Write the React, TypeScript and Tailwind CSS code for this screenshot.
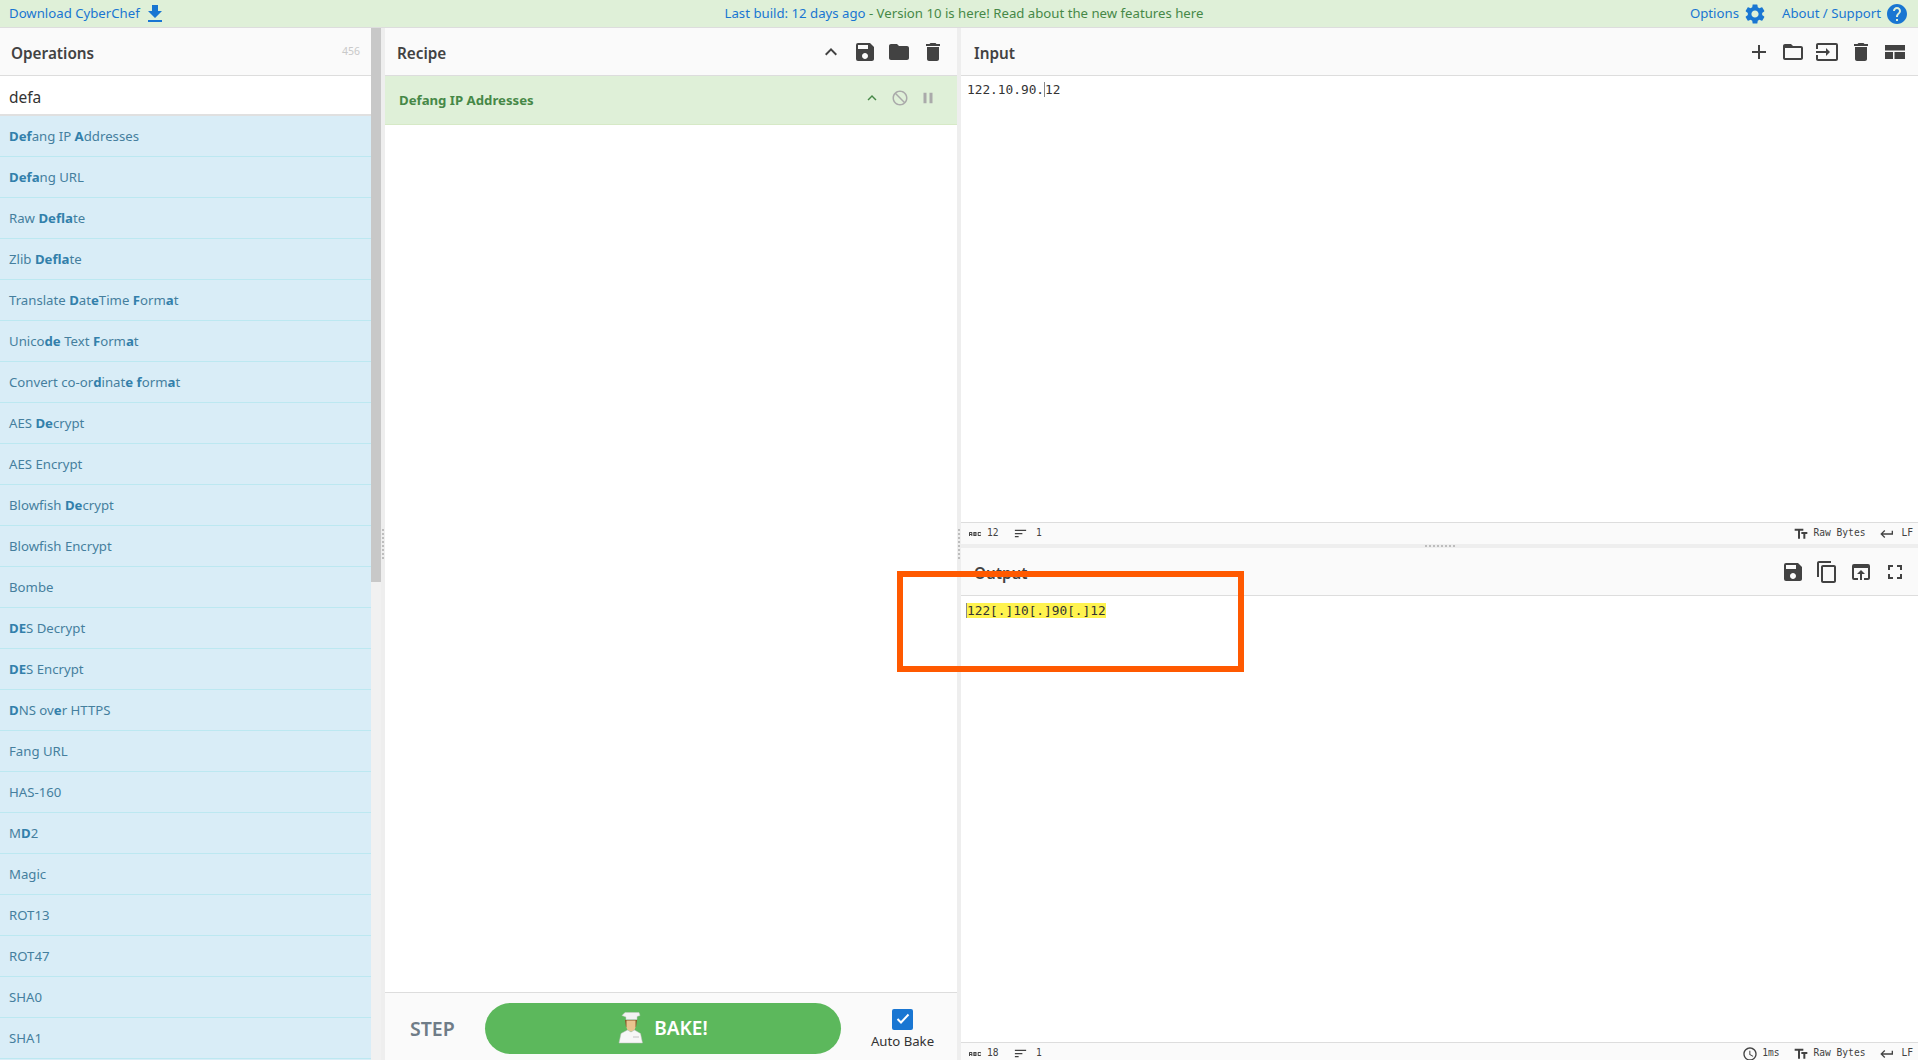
import {
  MdAbc,
  MdAccessTime,
  MdAdd,
  MdBlock,
  MdContentCopy,
  MdDelete,
  MdFileDownload,
  MdFolder,
  MdFolderOpen,
  MdFullscreen,
  MdHelp,
  MdInput,
  MdKeyboardArrowUp,
  MdKeyboardReturn,
  MdOpenInBrowser,
  MdPause,
  MdSave,
  MdSettings,
  MdSort,
  MdTextFields,
} from 'react-icons/md';
import type { ReactNode } from 'react';

const SANS = 'font-["Noto_Sans","Open_Sans",sans-serif]';
const MONO = 'font-["DejaVu_Sans_Mono",monospace]';

// text between asterisks is the part that matched the search
const operations = [
  '*Def*ang IP *A*ddresses',
  '*Defa*ng URL',
  'Raw *Defla*te',
  'Zlib *Defla*te',
  'Translate *D*at*e*Time *F*orm*a*t',
  'Unico*de* Text *F*orm*a*t',
  'Convert co-or*d*inat*e* *f*orm*a*t',
  'AES *De*crypt',
  'AES Encrypt',
  'Blowfish *De*crypt',
  'Blowfish Encrypt',
  'Bombe',
  '*DE*S Decrypt',
  '*DE*S Encrypt',
  '*D*NS ov*e*r HTTPS',
  'Fang URL',
  'HAS-160',
  'M*D*2',
  'Magic',
  'ROT13',
  'ROT47',
  'SHA0',
  'SHA1',
];

function OperationRow({ label }: { label: string }) {
  const parts = label.split('*');
  return (
    <li className="h-[41px] shrink-0 flex items-center pl-[9px] pt-[1px] bg-[#d9edf7] border-b border-[#bce8f1] text-[13.2px] text-[#457f9e] whitespace-pre">
      {parts.map((part, i) =>
        i % 2 === 1 ? (
          <b key={i} className="font-bold text-[#3280ab]">
            {part}
          </b>
        ) : (
          <span key={i}>{part}</span>
        ),
      )}
    </li>
  );
}

function IconButton({ children }: { children: ReactNode }) {
  return <span className="w-[34px] h-[34px] flex items-center justify-center text-[#424242]">{children}</span>;
}

function PaneHeader({
  title,
  children,
  titleClass,
  actionsClass = 'pr-[6px]',
}: {
  title: string;
  children?: ReactNode;
  titleClass: string;
  actionsClass?: string;
}) {
  return (
    <div className="h-[48px] shrink-0 flex items-center justify-between bg-[#fafafa] border-b border-[#dddddd]">
      <h2 className={`pt-[3px] text-[15.3px] font-semibold text-[#424242] ${titleClass}`}>{title}</h2>
      <div className={`flex items-center ${actionsClass}`}>{children}</div>
    </div>
  );
}

function Grip({ vertical }: { vertical?: boolean }) {
  const dots = Array.from({ length: 8 });
  return (
    <div className={vertical ? 'flex flex-col gap-[2px]' : 'flex gap-[2px]'}>
      {dots.map((_, i) => (
        <span key={i} className="w-[2px] h-[2px] bg-[#bdbdbd]" />
      ))}
    </div>
  );
}

function StatusBar({ chars, time }: { chars: number; time?: string }) {
  return (
    <div className={`h-[22px] shrink-0 flex items-center justify-between pl-[6px] pr-[5px] bg-[#fafafa] border-t border-[#dddddd] text-[9.6px] text-[#424242] ${MONO}`}>
      <div className="flex items-center">
        <MdAbc size={16} className="mr-[4px]" />
        <span className="w-[14px]">{chars}</span>
        <MdSort size={15} className="ml-[12px] mr-[8px]" />
        <span>1</span>
      </div>
      <div className="flex items-center">
        {time && (
          <>
            <MdAccessTime size={16} className="mr-[4px]" />
            <span className="mr-[14px]">{time}</span>
          </>
        )}
        <MdTextFields size={16} className="mr-[4px]" />
        <span>Raw Bytes</span>
        <MdKeyboardReturn size={16} className="ml-[14px] mr-[6px]" />
        <span>LF</span>
      </div>
    </div>
  );
}

function LayoutIcon() {
  return (
    <svg width="20" height="14" viewBox="0 0 20 14" fill="#424242">
      <rect x="0" y="0" width="20" height="5.5" />
      <rect x="0" y="7" width="8" height="7" />
      <rect x="9.5" y="7" width="10.5" height="7" />
    </svg>
  );
}

function ChefIcon() {
  return (
    <svg width="26" height="32" viewBox="0 0 26 32">
      <path d="M7 0.5h14l1 3-3 1v3H8V5L4 3.5z" fill="#f2f2f2" stroke="#c9c9c9" strokeWidth="0.5" />
      <path d="M7 8h12l-1 7h-10z" fill="#8a5526" />
      <path d="M8.5 8.5h9v6c0 3-2 5-4.5 5s-4.5-2-4.5-5z" fill="#e8c48e" />
      <path d="M9.5 18l3.5 2 3.5-2 6 3.5 2 9.500H1l2-9.500z" fill="#f7f7f7" stroke="#bdbdbd" strokeWidth="0.5" />
      <path d="M15 25h6" stroke="#b5b5b5" strokeWidth="0.8" />
    </svg>
  );
}

export default function App() {
  return (
    <div className={`relative h-[1060px] w-full overflow-hidden bg-white flex flex-col ${SANS}`}>
      <header className="h-[28px] shrink-0 flex items-center justify-between pl-[9px] pr-[9px] bg-[#dff0d8] border-b border-[#dddddd] text-[13.2px] text-[#1976d2]">
        <div className="flex items-center w-[400px]">
          <span>Download CyberChef</span>
          <MdFileDownload size={24} className="ml-[3px]" />
        </div>
        <div className="ml-[10px]">
          <span>Last build: 12 days ago</span>
          <span className="text-[#468847]"> - Version 10 is here! Read about the new features here</span>
        </div>
        <div className="flex items-center justify-end w-[400px]">
          <span>Options</span>
          <MdSettings size={24} className="ml-[4px]" />
          <span className="ml-[15px]">About / Support</span>
          <MdHelp size={24} className="ml-[4px]" />
        </div>
      </header>

      <div className="flex-1 min-h-0 flex">
        <section className="w-[371px] shrink-0 flex flex-col">
          <div className="h-[48px] shrink-0 flex items-center justify-between pl-[11px] pr-[11px] bg-[#fafafa] border-b border-[#dddddd]">
            <h2 className="pt-[3px] text-[15.3px] font-semibold text-[#424242]">Operations</h2>
            <span className="text-[10.5px] text-[#c9c9c9]">456</span>
          </div>
          <div className="h-[40px] shrink-0 flex items-center pl-[9px] pt-[6px] bg-white border-b-2 border-[#e0e0e0] text-[15.5px] text-[#333333]">
            defa
          </div>
          <ul className="flex-1 min-h-0 flex flex-col overflow-hidden bg-[#d9edf7]">
            {operations.map((op) => (
              <OperationRow key={op} label={op} />
            ))}
          </ul>
        </section>

        <div className="w-[10px] shrink-0 flex flex-col bg-[#f1f1f1]">
          <div className="h-[554px] bg-[#c8c8c8]" />
        </div>

        <div className="w-[4px] shrink-0 flex items-center justify-center bg-[#eeeeee]">
          <Grip vertical />
        </div>

        <section className="w-[572px] shrink-0 flex flex-col">
          <PaneHeader title="Recipe" titleClass="pl-[12px]" actionsClass="pr-[7px]">
            <IconButton>
              <MdKeyboardArrowUp size={24} />
            </IconButton>
            <IconButton>
              <MdSave size={24} />
            </IconButton>
            <IconButton>
              <MdFolder size={24} />
            </IconButton>
            <IconButton>
              <MdDelete size={24} />
            </IconButton>
          </PaneHeader>
          <div className="h-[49px] shrink-0 flex items-center justify-between pl-[14px] pr-[20px] bg-[#dff0d8] border-b border-[#d6e9c6]">
            <span className="pt-[2px] text-[13.2px] font-bold text-[#468847]">Defang IP Addresses</span>
            <div className="flex items-center gap-[10px] -mt-[4px] text-[#aaaaaa]">
              <MdKeyboardArrowUp size={18} className="text-[#468847]" />
              <MdBlock size={18} className="-scale-x-100" />
              <MdPause size={18} />
            </div>
          </div>
          <div className="flex-1" />
          <div className="h-[68px] shrink-0 flex items-center bg-[#fafafa] border-t border-[#dddddd]">
            <span className="w-[100px] pl-[25px] pt-[5px] text-[19.5px] font-semibold text-[#6f7c87]">STEP</span>
            <button className="w-[356px] h-[51px] mt-[3px] flex items-center justify-center gap-[10px] rounded-full bg-[#5cb85c] text-[19px] font-semibold text-white">
              <ChefIcon />
              <span>BAKE!</span>
            </button>
            <div className="flex-1 pl-[7px] pt-[7px] flex flex-col items-center gap-[2px] text-[13.2px] text-[#333333]">
              <span className="w-[21px] h-[21px] flex items-center justify-center rounded-[2px] bg-[#1976d2]">
                <svg width="14" height="12" viewBox="0 0 14 12" fill="none" stroke="white" strokeWidth="2">
                  <path d="M1.500 6l3.500 3.500 7.500-8" />
                </svg>
              </span>
              <span>Auto Bake</span>
            </div>
          </div>
        </section>

        <div className="w-[4px] shrink-0 flex items-center justify-center bg-[#eeeeee]">
          <Grip vertical />
        </div>

        <section className="flex-1 min-w-0 flex flex-col">
          <PaneHeader title="Input" titleClass="pl-[13px]">
            <IconButton>
              <MdAdd size={24} />
            </IconButton>
            <IconButton>
              <MdFolderOpen size={24} />
            </IconButton>
            <IconButton>
              <MdInput size={24} />
            </IconButton>
            <IconButton>
              <MdDelete size={24} />
            </IconButton>
            <IconButton>
              <LayoutIcon />
            </IconButton>
          </PaneHeader>
          <div className={`h-[446px] shrink-0 pl-[6px] pt-[5px] text-[12.800px] leading-[17px] text-[#333333] ${MONO}`}>
            <span>122.10.90.</span>
            <span className="border-l border-[#8a8a8a]">12</span>
          </div>
          <StatusBar chars={12} />
          <div className="h-[4px] shrink-0 flex items-center justify-center bg-[#eeeeee]">
            <Grip />
          </div>
          <PaneHeader title="Output" titleClass="pl-[13px]">
            <IconButton>
              <MdSave size={24} />
            </IconButton>
            <IconButton>
              <MdContentCopy size={24} />
            </IconButton>
            <IconButton>
              <MdOpenInBrowser size={24} />
            </IconButton>
            <IconButton>
              <MdFullscreen size={24} />
            </IconButton>
          </PaneHeader>
          <div className={`h-[446px] shrink-0 pl-[5px] pt-[6px] text-[12.800px] leading-[17px] text-[#333333] ${MONO}`}>
            <span className="border-l border-[#8a8a8a] bg-[#fff34f]">122[.]10[.]90[.]12</span>
          </div>
          <StatusBar chars={18} time="1ms" />
        </section>
      </div>

      <div className="absolute left-[897px] top-[571px] w-[347px] h-[101px] border-[6px] border-[#ff5900]" />
    </div>
  );
}
